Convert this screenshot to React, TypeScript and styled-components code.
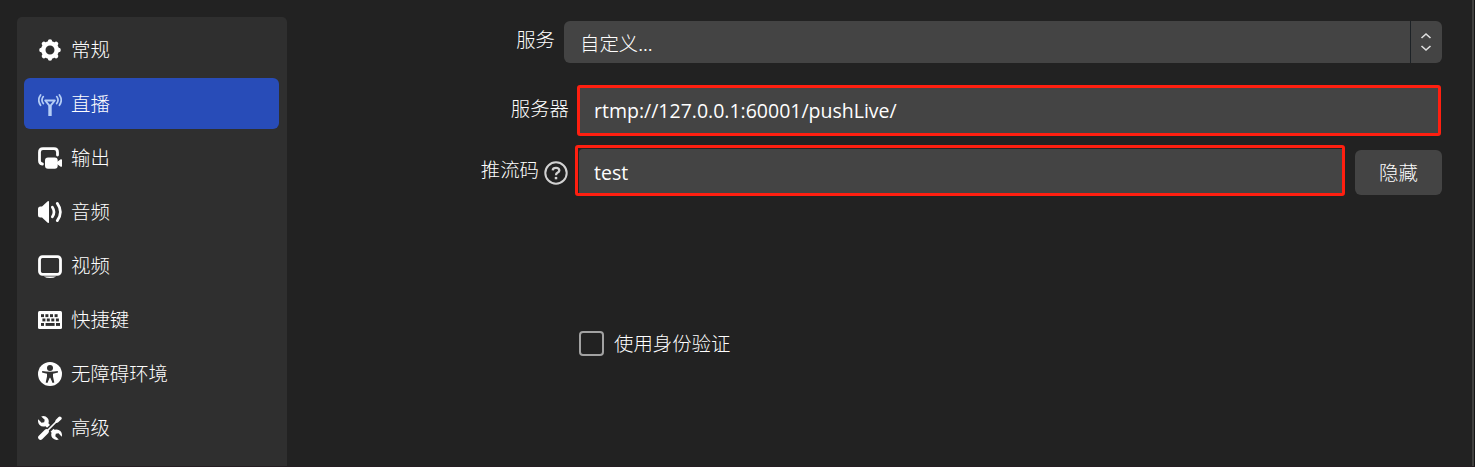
import React from "react";
import styled, { createGlobalStyle } from "styled-components";

const GlobalStyle = createGlobalStyle`
  * { box-sizing: border-box; }
  body {
    margin: 0;
    background: #222222;
    color: #fefefe;
    font-family: "Open Sans", "Noto Sans CJK SC", sans-serif;
    font-size: 19.4px;
    overflow: hidden;
  }
`;

const Window = styled.div`
  display: flex;
  height: 467px;
  width: 1475px;
  overflow: hidden;
  border-bottom: 1px solid #251d22;
`;

const Sidebar = styled.nav`
  display: flex;
  flex-direction: column;
  gap: 3px;
  flex: none;
  width: 270px;
  margin: 17px 0 0 17px;
  padding: 7px 8px 0 7px;
  background: #2f2f2f;
  border-radius: 5px 5px 0 0;
`;

const NavItem = styled.div<{ $active?: boolean }>`
  display: flex;
  align-items: center;
  gap: 9px;
  flex: none;
  height: 51px;
  padding: 0 14px;
  border-radius: 6px;
  background: ${(p) => (p.$active ? "#284cb8" : "transparent")};
  color: ${(p) => (p.$active ? "#b4cdf5" : "#fefefe")};
`;

const Icon = styled.svg`
  display: block;
  flex: none;
  width: 24px;
  height: 24px;
  margin-top: 1px;
`;

const CjkText = styled.span`
  padding-bottom: 2px;
  font-family: "Noto Sans CJK SC", sans-serif;
  font-weight: 300;
  line-height: 28px;
  color: #fefefe;
  white-space: nowrap;
`;

const Form = styled.main`
  flex: 1;
  padding: 21px 30px 0 0;
`;

const FormRow = styled.div<{ $height: number; $gap: number }>`
  display: flex;
  height: ${(p) => p.$height}px;
  margin-bottom: ${(p) => p.$gap}px;
`;

const Label = styled.label<{ $width: number; $top: number; $right?: number }>`
  display: flex;
  justify-content: flex-end;
  align-items: flex-start;
  gap: 5px;
  flex: none;
  width: ${(p) => p.$width}px;
  padding: ${(p) => p.$top}px ${(p) => p.$right ?? 8}px 0 0;
`;

const Select = styled.div`
  display: flex;
  flex: 1;
  border-radius: 6px;
  background: #444444;
  overflow: hidden;
`;

const SelectValue = styled.div`
  display: flex;
  align-items: center;
  flex: 1;
  padding: 4px 16px 0;
`;

const SelectArrows = styled.div`
  display: flex;
  align-items: center;
  justify-content: center;
  width: 32px;
  padding-right: 1px;
  border-left: 1px solid #1d2226;
`;

const Outline = styled.div<{ $inset?: boolean }>`
  display: flex;
  flex: 1;
  margin-right: ${(p) => (p.$inset ? 0 : 1)}px;
  border: 3px solid #ff1f10;
  border-radius: 3px;
  padding: ${(p) => (p.$inset ? "1px 0 0 1px" : "0")};
`;

const Input = styled.input`
  flex: 1;
  min-width: 0;
  border: 0;
  outline: 0;
  padding: 0 14px;
  background: #444444;
  color: #fefefe;
  font: 19.5px "Open Sans", sans-serif;
`;

const KeyInput = styled(Input)`
  padding: 2px 15px 0;
  border-radius: 4px 0 0 0;
`;

const Button = styled.button`
  flex: none;
  width: 87px;
  height: 45px;
  margin: 5px 0 0 10px;
  padding: 0 0 2px;
  border: 0;
  border-radius: 6px;
  background: #444444;
  font-size: 19.4px;
`;

const CheckRow = styled.div`
  display: flex;
  align-items: center;
  gap: 10px;
  margin: 133px 0 0 292px;
`;

const CheckBox = styled.span`
  width: 25px;
  height: 25px;
  margin-bottom: 2px;
  border: 2px solid #a2a2a2;
  border-radius: 4px;
`;

const WindowEdge = styled.div`
  flex: none;
  width: 3px;
  background: #151515;
  border-left: 2px solid #40403e;
`;

const teeth = [0, 45, 90, 135, 180, 225, 270, 315];

const GearIcon = () => (
  <Icon viewBox="0 0 24 24" fill="none" stroke="currentColor">
    <circle cx="12" cy="12" r="6.7" strokeWidth="4.4" />
    {teeth.map((a) => (
      <path key={a} d="M12 4.2V3.4" strokeWidth="4.4" strokeLinecap="round" transform={`rotate(${a} 12 12)`} />
    ))}
  </Icon>
);

const AntennaIcon = () => (
  <Icon viewBox="0 0 24 24" fill="none" stroke="currentColor">
    <path d="M7.200 8.500h9.600L12 14.300z" strokeWidth="1.900" strokeLinejoin="round" />
    <path d="M12 13.800V24" strokeWidth="3.400" />
    <path d="M5.300 4.600q-2.700 3.500 0 7M18.700 4.600q2.700 3.500 0 7M2.600 2.900q-3.700 5.200 0 10.400M21.400 2.900q3.700 5.200 0 10.400" strokeWidth="1.700" strokeLinecap="round" />
  </Icon>
);

const OutputIcon = () => (
  <Icon viewBox="0 0 24 24">
    <path d="M4.400 18Q1.500 17.600 1.500 14.700V6.200Q1.500 2.700 5 2.700H16Q19.500 2.700 19.500 6.200V9" fill="none" stroke="currentColor" strokeWidth="2.800" strokeLinecap="round" />
    <rect x="7" y="11.500" width="12.700" height="11.200" rx="3" fill="currentColor" />
    <path d="M19 16l3.700-2.700q1.300-.4 1.300.8v5.800q0 1.200-1.300.8L19 18z" fill="currentColor" />
  </Icon>
);

const AudioIcon = () => (
  <Icon viewBox="0 0 24 24">
    <path d="M0 9q0-2.500 2.500-2.500H4L9.700 1.300Q11 .5 11 2v20q0 1.500-1.300.7L4 17.500H2.500Q0 17.500 0 15z" fill="currentColor" />
    <path d="M14.400 7.200q3.200 4.800 0 9.600M19.300 3.400q6.200 8.600 0 17.200" fill="none" stroke="currentColor" strokeWidth="2.700" strokeLinecap="round" />
  </Icon>
);

const VideoIcon = () => (
  <Icon viewBox="0 0 24 24">
    <rect x="1.500" y="2.700" width="21" height="17.600" rx="3" fill="none" stroke="currentColor" strokeWidth="2.800" />
    <path d="M5.800 22.400h12.400q-2.500 1.500-6.200 1.500t-6.200-1.500z" fill="currentColor" />
  </Icon>
);

const keys = [
  [3, 6.2, 3], [7.4, 6.2, 3], [12, 6.2, 3], [16.600, 6.2, 3],
  [4.400, 10.500, 3], [8.800, 10.500, 3], [13.300, 10.500, 3], [17.900, 10.500, 3],
  [3, 15, 3], [7.600, 15, 9], [18, 15, 4],
];

const KeyboardIcon = () => (
  <Icon viewBox="0 0 24 24">
    <rect y="3" width="24" height="18" rx="1.500" fill="currentColor" />
    {keys.map(([x, y, w]) => (
      <rect key={`${x}-${y}`} x={x} y={y} width={w} height="2.900" fill="#2f2f2f" />
    ))}
  </Icon>
);

const AccessibilityIcon = () => (
  <Icon viewBox="0 0 24 24">
    <circle cx="12" cy="12" r="12" fill="currentColor" />
    <circle cx="12" cy="5.900" r="3" fill="#2f2f2f" />
    <path d="M4.200 9.100Q12 10.500 19.800 9.100L20 10.500 15 11.700V14.500L16.300 20.500 14.600 21 12.300 15.800h-.6L9.400 21 7.700 20.500 9 14.500V11.700L4 10.500z" fill="#2f2f2f" />
  </Icon>
);

const ToolsIcon = () => (
  <Icon viewBox="0 0 24 24" fill="currentColor">
    <path d="M3.200.5Q7-.8 9.500 1.900 11.500 4.300 10.400 7.300L12 8.900 9.100 11.800 7.500 10.200Q4 11.400 1.600 9-.7 6.400.3 3.200L3.500 6.700 6.200 6.300 6.700 3.700z" />
    <path d="M20.800 23.500Q17 24.800 14.500 22.100 12.500 19.700 13.600 16.700L12.600 15.700 15.500 12.800 16.500 13.800Q20 12.600 22.400 15 24.700 17.600 23.700 20.800L20.500 17.300 17.800 17.700 17.300 20.300z" />
    <path d="M7 17L20 4" stroke="#2f2f2f" strokeWidth="3.700" />
    <path d="M8 16L20 4" stroke="currentColor" strokeWidth="1.700" />
    <path d="M17.600 4.100L20.600.9Q21.800-.2 23.100 1.100T23.200 3.500L20 6.500 18.300 6.900 17.200 5.800z" />
    <path d="M2.500 21.500L8.500 15.500" stroke="currentColor" strokeWidth="4.700" strokeLinecap="round" />
  </Icon>
);

const HelpMark = styled(Icon)`
  margin-top: 6px;
  color: #d2d2d2;
`;

const HelpIcon = () => (
  <HelpMark viewBox="0 0 24 24" fill="none" stroke="currentColor">
    <circle cx="12" cy="12" r="10.700" strokeWidth="2" />
    <path d="M8.700 9.300Q8.900 6.900 12 6.900T15.300 9.400Q15.300 10.700 13.700 11.600 12 12.500 12 14.300" strokeWidth="2.300" />
    <path d="M12 15.900v2.400" strokeWidth="2.500" />
  </HelpMark>
);

const navItems = [
  { text: "常规", icon: <GearIcon /> },
  { text: "直播", icon: <AntennaIcon />, active: true },
  { text: "输出", icon: <OutputIcon /> },
  { text: "音频", icon: <AudioIcon /> },
  { text: "视频", icon: <VideoIcon /> },
  { text: "快捷键", icon: <KeyboardIcon /> },
  { text: "无障碍环境", icon: <AccessibilityIcon /> },
  { text: "高级", icon: <ToolsIcon /> },
];

export default function App() {
  return (
    <>
      <GlobalStyle />
      <Window>
        <Sidebar>
          {navItems.map((item) => (
            <NavItem key={item.text} $active={item.active}>
              {item.icon}
              <CjkText>{item.text}</CjkText>
            </NavItem>
          ))}
        </Sidebar>
        <Form>
          <FormRow $height={42} $gap={22}>
            <Label $width={277} $top={4} $right={9}>
              <CjkText>服务</CjkText>
            </Label>
            <Select>
              <SelectValue>
                <CjkText>自定义...</CjkText>
              </SelectValue>
              <SelectArrows>
                <svg width="12" height="20" viewBox="0 0 12 20" fill="none" stroke="#dedede" strokeWidth="1.600">
                  <path d="M1.500 6L6 2l4.500 4M1.500 14L6 18l4.500-4" />
                </svg>
              </SelectArrows>
            </Select>
          </FormRow>
          <FormRow $height={51} $gap={9}>
            <Label $width={290} $top={9}>
              <CjkText>服务器</CjkText>
            </Label>
            <Outline>
              <Input defaultValue="rtmp://127.0.0.1:60001/pushLive/" />
            </Outline>
          </FormRow>
          <FormRow $height={51} $gap={0}>
            <Label $width={288} $top={10} $right={7}>
              <CjkText>推流码</CjkText>
              <HelpIcon />
            </Label>
            <Outline $inset>
              <KeyInput defaultValue="test" />
            </Outline>
            <Button>
              <CjkText>隐藏</CjkText>
            </Button>
          </FormRow>
          <CheckRow>
            <CheckBox />
            <CjkText>使用身份验证</CjkText>
          </CheckRow>
        </Form>
        <WindowEdge />
      </Window>
    </>
  );
}
